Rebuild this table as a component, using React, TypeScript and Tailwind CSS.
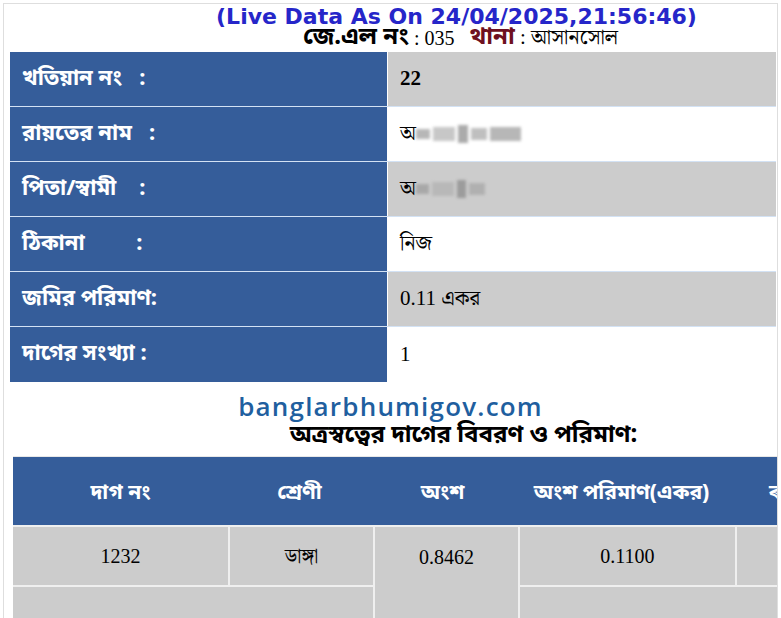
import React from 'react';

const bn = "font-['Noto_Sans_Bengali','Lohit_Bengali','Noto_Serif_Bengali','Vrinda',sans-serif]";
const serif = "font-['Liberation_Serif','Noto_Serif_Bengali','Noto_Sans_Bengali',serif]";

const rows = [
  { label: 'খতিয়ান নং   :', value: '22', bold: true },
  { label: 'রায়তের নাম   :', value: 'অ', blur: 'w-[105px]' },
  { label: 'পিতা/স্বামী    :', value: 'অ', blur: 'w-[72px]' },
  { label: 'ঠিকানা         :', value: 'নিজ' },
  { label: 'জমির পরিমাণ:', value: '0.11 একর' },
  { label: 'দাগের সংখ্যা :', value: '1' },
];

// pixelated, blurred name (hidden in the source picture)
const Blur = ({ w }: { w: string }) => (
  <span className={`inline-flex items-center gap-[3px] h-[20px] ${w} opacity-70 blur-[1.5px]`}>
    <span className="h-[10px] w-[14px] bg-[#9a9a9a]" />
    <span className="h-[14px] w-[22px] bg-[#b0b0b0]" />
    <span className="h-[18px] w-[10px] bg-[#888]" />
    <span className="h-[12px] w-[16px] bg-[#a5a5a5]" />
    <span className="h-[14px] flex-1 bg-[#999]" />
  </span>
);

export default function App() {
  return (
    <div className="w-[781px] h-[618px] overflow-hidden bg-white">
      <div className="mx-[3px] mt-[3px] h-[615px] border-x border-t border-[#dedede] overflow-hidden">
        <div className="h-[23px] pt-[1px] flex items-center justify-center font-['DejaVu_Sans',sans-serif] font-bold text-[22px] text-[#2626c9] pl-[132px]">
          (Live Data As On 24/04/2025,21:56:46)
        </div>
        <div className="h-[22px] flex items-center justify-center pl-[140px] whitespace-pre">
          <span className={`${bn} font-bold text-[24px] text-black`}>জে.এল নং</span>
          <span className={`${serif} text-[20px] text-black`}> : 035   </span>
          <span className={`${bn} font-bold text-[24px] text-[#6e1020]`}>থানা</span>
          <span className={`${serif} text-[21px] text-black`}> : আসানসোল</span>
        </div>

        <div className="ml-[6px] mr-[1px] mt-[3px] flex flex-col">
          {rows.map((r, i) => (
            <div key={i} className="flex h-[55px] border-b border-[#d3e2f4] last:border-b-0">
              <div className={`w-[377px] bg-[#355d9a] text-white font-bold text-[22px] ${bn} flex items-center pl-[12px] whitespace-pre`}>
                {r.label}
              </div>
              <div className={`flex-1 ml-px flex items-center pl-[12px] ${i % 2 === 0 ? 'bg-[#cccccc]' : 'bg-white'} ${serif} text-[21px] text-black ${r.bold ? 'font-bold' : ''}`}>
                {r.value}
                {r.blur && <Blur w={r.blur} />}
              </div>
            </div>
          ))}
        </div>

        <div className="mt-[9px] text-center">
          <div className="font-['Open_Sans',sans-serif] font-semibold text-[26px] leading-[30px] tracking-[1.2px] text-[#1f5f9f]">
            banglarbhumigov.com
          </div>
          <div className={`${bn} font-bold text-[24px] leading-[30px] text-black pl-[146px]`}>
            অত্রস্বত্বের দাগের বিবরণ ও পরিমাণ:
          </div>
        </div>

        <div className="ml-[9px] mt-[5px] w-[790px]">
          <div className={`flex h-[69px] bg-[#355d9a] text-white font-bold text-[21px] ${bn} border-t border-[#e8e8e8]`}>
            <div className="w-[215px] flex items-center justify-center pt-[8px]">দাগ নং</div>
            <div className="w-[143px] flex items-center justify-center pt-[8px]">শ্রেণী</div>
            <div className="w-[143px] flex items-center justify-center pt-[8px]">অংশ</div>
            <div className="w-[215px] flex items-center justify-center pt-[8px]">অংশ পরিমাণ(একর)</div>
            <div className="flex-1 flex items-center pl-[40px] pt-[8px]">ৰ</div>
          </div>
          <div className={`grid grid-cols-[215px_143px_143px_215px_1fr] grid-rows-[58px_40px] gap-[2px] bg-[#efefef] pt-[2px] ${serif} text-[20px] text-black`}>
            <div className="bg-[#cccccc] flex items-center justify-center">1232</div>
            <div className="bg-[#cccccc] flex items-center justify-center">ডাঙ্গা</div>
            <div className="bg-[#cccccc] row-span-2 flex justify-center pt-[15px]">0.8462</div>
            <div className="bg-[#cccccc] flex items-center justify-center">0.1100</div>
            <div className="bg-[#cccccc]" />
            <div className="bg-[#cccccc] col-span-2" />
            <div className="bg-[#cccccc] col-span-2" />
          </div>
        </div>
      </div>
    </div>
  );
}
